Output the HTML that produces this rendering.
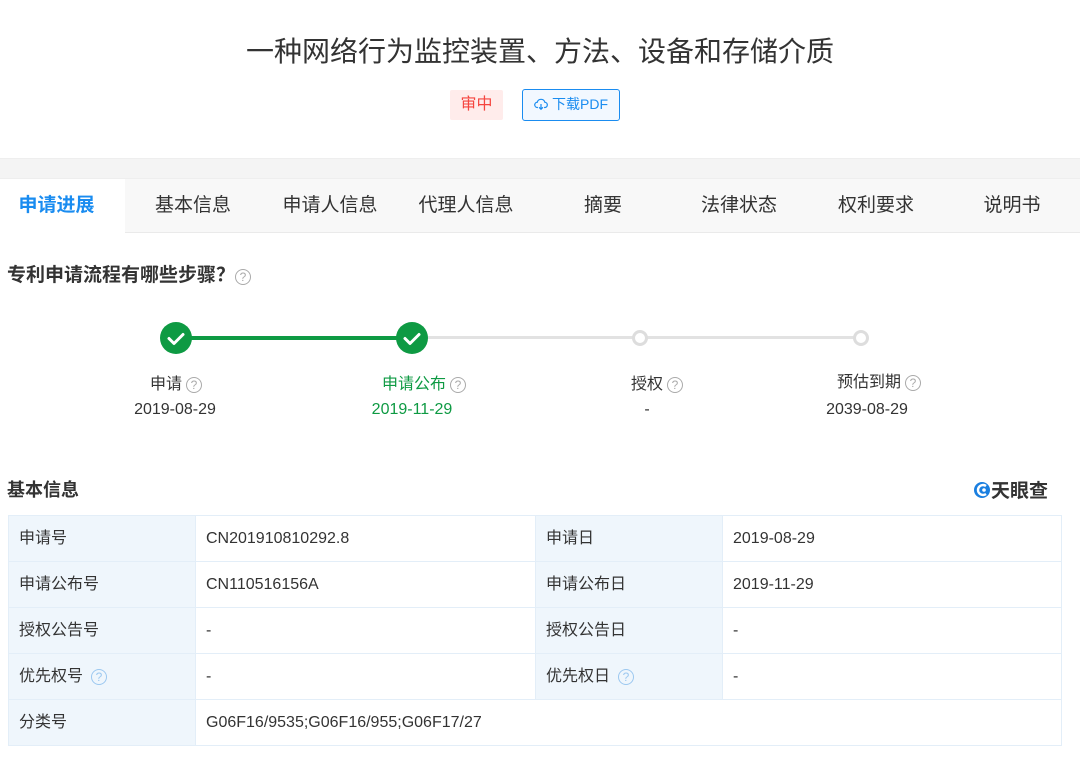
<!DOCTYPE html>
<html><head><meta charset="utf-8"><style>
*{margin:0;padding:0;box-sizing:border-box}
body{width:1080px;height:764px;background:#fff;font-family:"Liberation Sans","Noto Sans CJK SC",sans-serif;color:#333;position:relative;overflow:hidden}
.a{position:absolute;white-space:nowrap}
.title{left:0;width:1080px;top:30px;text-align:center;font-size:28px;color:#333;line-height:44px}
.tag{left:450px;top:90px;width:53px;height:30px;background:#ffeceb;color:#f5453f;font-size:16px;line-height:30px;text-align:center;border-radius:2px}
.btn{left:522px;top:89px;width:98px;height:32px;border:1.5px solid #1a8cf0;background:#f2f8ff;color:#1a8cf0;font-size:14px;line-height:29px;border-radius:3px;text-align:center}
.band{left:0;top:158px;width:1080px;height:20px;background:#f4f4f4;border-top:1px solid #eee}
.tabs{left:0;top:178px;width:1080px;height:55px;background:#f8f8f8;border-bottom:1px solid #eaeaea;border-top:1px solid #eee}
.tab{position:absolute;top:0;height:54px;line-height:54px;font-size:19px;color:#333;text-align:center;width:136px}
.tab.on{background:#fff;color:#1a8cf0;font-weight:bold;width:125px;left:0;text-indent:-12px}
.h{font-size:19px;font-weight:bold;color:#333}
.q{display:inline-block;width:16px;height:16px;border:1px solid #aaa;border-radius:50%;font-size:12px;line-height:14px;text-align:center;color:#aaa;vertical-align:0px;margin-left:4px;font-weight:normal}
.lbl{font-size:16px;text-align:center;width:200px;line-height:20px}
.dt{font-size:16px;text-align:center;width:200px;line-height:20px}
table{position:absolute;left:8px;top:515px;width:1054px;border-collapse:collapse;font-size:16px}
td{border:1.5px solid #e3eef8;height:46px;padding-left:10px;color:#333;line-height:20px;vertical-align:middle}
td.k{background:#eff6fc;width:187px}
</style></head><body>
<div class="a title">一种网络行为监控装置、方法、设备和存储介质</div>
<div class="a tag">审中</div>
<div class="a btn"><svg width="14" height="14" viewBox="0 0 16 16" style="vertical-align:-2px;margin-right:4px" fill="none" stroke="#1a8cf0" stroke-width="1.4"><path d="M4.5 12H4a3 3 0 0 1-.3-6A4.5 4.5 0 0 1 12.4 6 3 3 0 0 1 12 12h-.5"/><path d="M8 8v6M5.8 11.8 8 14l2.2-2.2"/></svg>下载PDF</div>
<div class="a band"></div>
<div class="a tabs">
<div class="tab on">申请进展</div>
<div class="tab" style="left:125px">基本信息</div>
<div class="tab" style="left:262px">申请人信息</div>
<div class="tab" style="left:398px">代理人信息</div>
<div class="tab" style="left:535px">摘要</div>
<div class="tab" style="left:671px">法律状态</div>
<div class="tab" style="left:808px">权利要求</div>
<div class="tab" style="left:944px">说明书</div>
</div>
<div class="a h" style="left:7px;top:264px;line-height:24px">专利申请流程有哪些步骤？<span class="q" style="margin-left:0">?</span></div>
<div class="a" style="left:176px;top:336px;width:236px;height:4px;background:#0e9a43"></div>
<div class="a" style="left:412px;top:336px;width:450px;height:3px;background:#e2e2e2"></div>
<svg class="a" style="left:159px;top:321px" width="34" height="34"><circle cx="17" cy="17" r="16" fill="#0e9a43"/><path d="M10 17.5l5 5 9-9" stroke="#fff" stroke-width="3" fill="none" stroke-linecap="round" stroke-linejoin="round"/></svg>
<svg class="a" style="left:395px;top:321px" width="34" height="34"><circle cx="17" cy="17" r="16" fill="#0e9a43"/><path d="M10 17.5l5 5 9-9" stroke="#fff" stroke-width="3" fill="none" stroke-linecap="round" stroke-linejoin="round"/></svg>
<svg class="a" style="left:631px;top:329px" width="18" height="18"><circle cx="9" cy="9" r="6.5" fill="#fff" stroke="#ddd" stroke-width="3"/></svg>
<svg class="a" style="left:852px;top:329px" width="18" height="18"><circle cx="9" cy="9" r="6.5" fill="#fff" stroke="#ddd" stroke-width="3"/></svg>
<div class="a lbl" style="left:76px;top:375px">申请<span class="q">?</span></div>
<div class="a dt" style="left:75px;top:400px">2019-08-29</div>
<div class="a lbl" style="left:324px;top:375px;color:#0e9a43">申请公布<span class="q">?</span></div>
<div class="a dt" style="left:312px;top:400px;color:#0e9a43">2019-11-29</div>
<div class="a lbl" style="left:557px;top:375px">授权<span class="q">?</span></div>
<div class="a dt" style="left:547px;top:400px">-</div>
<div class="a lbl" style="left:779px;top:373px">预估到期<span class="q">?</span></div>
<div class="a dt" style="left:767px;top:400px">2039-08-29</div>
<div class="a h" style="left:7px;top:476px;font-size:18px">基本信息</div>
<div class="a" style="left:973px;top:476px;font-size:19px;font-weight:bold;color:#333"><svg width="18" height="18" viewBox="0 0 18 18" style="vertical-align:-2px"><circle cx="9" cy="9" r="8" fill="#1a7fe0"/><path d="M13 5a5 5 0 1 0 0 8" stroke="#fff" stroke-width="2.4" fill="none"/><circle cx="11" cy="9" r="1.8" fill="#fff"/></svg>天眼查</div>
<table>
<tr><td class="k">申请号</td><td style="width:340px">CN201910810292.8</td><td class="k">申请日</td><td>2019-08-29</td></tr>
<tr><td class="k">申请公布号</td><td>CN110516156A</td><td class="k">申请公布日</td><td>2019-11-29</td></tr>
<tr><td class="k">授权公告号</td><td>-</td><td class="k">授权公告日</td><td>-</td></tr>
<tr><td class="k">优先权号<span class="q" style="border-color:#9cc8f0;color:#9cc8f0;margin-left:8px">?</span></td><td>-</td><td class="k">优先权日<span class="q" style="border-color:#9cc8f0;color:#9cc8f0;margin-left:8px">?</span></td><td>-</td></tr>
<tr><td class="k">分类号</td><td colspan="3">G06F16/9535;G06F16/955;G06F17/27</td></tr>
</table>
</body></html>
